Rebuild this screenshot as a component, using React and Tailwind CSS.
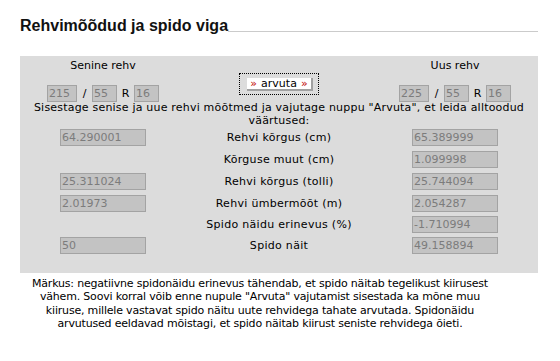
import React from "react";

function Box({ w, children }) {
  return (
    <div
      className="h-[17px] bg-[#c3c3c3] border border-[#a3a3a3] text-[#7c7c7c] pl-[1px] leading-[15px] text-[11px] overflow-hidden whitespace-nowrap"
      style={{ width: w }}
    >
      {children}
    </div>
  );
}

function SizeGroup({ label, a, b, c }) {
  return (
    <div className="flex flex-col items-center">
      <div className="leading-[13px] whitespace-nowrap">{label}</div>
      <div className="mt-[13px] flex items-center h-[16px]">
        <Box w={30}>{a}</Box>
        <span className="w-[15px] text-center leading-[13px]">/</span>
        <Box w={25}>{b}</Box>
        <span className="w-[17px] text-center leading-[13px]">R</span>
        <Box w={25}>{c}</Box>
      </div>
    </div>
  );
}

const rows = [
  { h: "h-[21px]", l: "64.290001", label: "Rehvi kõrgus (cm)", r: "65.389999" },
  { h: "h-[22px]", l: null, label: "Kõrguse muut (cm)", r: "1.099998" },
  { h: "h-[23px]", l: "25.311024", label: "Rehvi kõrgus (tolli)", r: "25.744094" },
  { h: "h-[21px]", l: "2.01973", label: "Rehvi ümbermõõt (m)", r: "2.054287" },
  { h: "h-[21px]", l: null, label: "Spido näidu erinevus (%)", r: "-1.710994" },
  { h: "h-[21px]", l: "50", label: "Spido näit", r: "49.158894" },
];

export default function App() {
  return (
    <div className="w-[560px] h-[361px] bg-white font-['DejaVu_Sans',Verdana,sans-serif] text-[11px] text-black overflow-hidden">
      <div className="flex pt-[17px] pl-[20px] pr-[22px]">
        <h1 className="font-['Liberation_Sans',Arial,sans-serif] font-bold text-[16px] leading-[18px] text-[#111] whitespace-nowrap">
          Rehvimõõdud ja spido viga
        </h1>
        <div className="flex-1 h-px bg-[#cbcbcb] mt-[14px]" />
      </div>

      <div className="ml-[20px] mt-[21px] w-[518px] h-[217px] bg-[#dcdcdc] pt-[3px]">
        <div className="grid grid-cols-[166px_186px_166px]">
          <SizeGroup label="Senine rehv" a="215" b="55" c="16" />
          <div className="flex justify-center">
            <div className="mt-[14px] w-[80px] h-[22px] border border-dotted border-black pl-[7px] pt-[4px]">
              <div className="w-[66px] h-[13px] bg-white border-r-2 border-b-2 border-[#a0a0a0] flex items-center justify-center leading-[12px] whitespace-nowrap">
                <span className="text-[#c00000]">»</span>
                <span className="mx-[4px]">arvuta</span>
                <span className="text-[#c00000]">»</span>
              </div>
            </div>
          </div>
          <SizeGroup label="Uus rehv" a="225" b="55" c="16" />
        </div>

        <div className="text-center leading-[13px] whitespace-nowrap tracking-[0.2px]">
          <div>Sisestage senise ja uue rehvi mõõtmed ja vajutage nuppu "Arvuta", et leida alltoodud</div>
          <div>väärtused:</div>
        </div>

        <div className="flex flex-col">
          {rows.map((row, i) => (
            <div key={i} className={`grid grid-cols-[166px_186px_166px] items-center ${row.h}`}>
              <div className="flex justify-center">
                {row.l !== null ? <Box w={86}>{row.l}</Box> : null}
              </div>
              <div className="text-center leading-[13px] whitespace-nowrap tracking-[0.3px]">{row.label}</div>
              <div className="flex justify-center">
                <Box w={86}>{row.r}</Box>
              </div>
            </div>
          ))}
        </div>
      </div>

      <div className="mt-[4px] w-[520px] text-center leading-[13.3px] whitespace-nowrap tracking-[-0.19px]">
        <div>Märkus: negatiivne spidonäidu erinevus tähendab, et spido näitab tegelikust kiirusest</div>
        <div>vähem. Soovi korral võib enne nupule "Arvuta" vajutamist sisestada ka mõne muu</div>
        <div>kiiruse, millele vastavat spido näitu uute rehvidega tahate arvutada. Spidonäidu</div>
        <div>arvutused eeldavad mõistagi, et spido näitab kiirust seniste rehvidega õieti.</div>
      </div>
    </div>
  );
}
